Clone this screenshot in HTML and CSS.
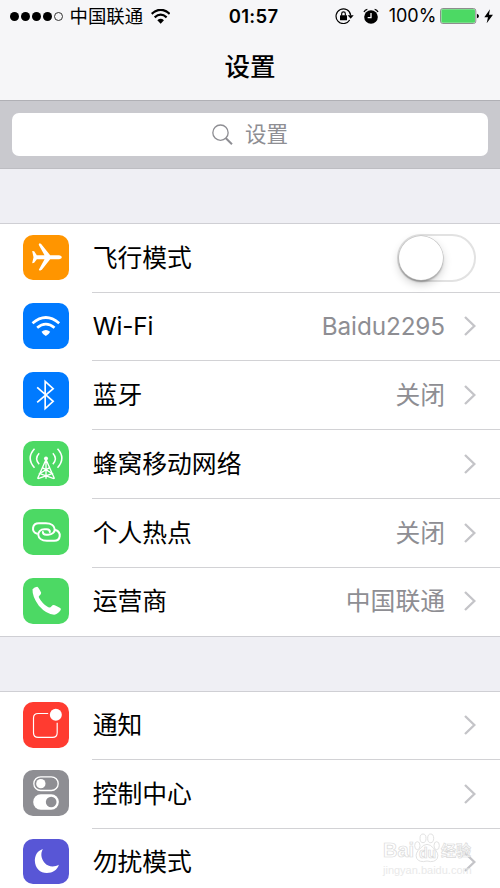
FILE: index.html
```html
<!DOCTYPE html>
<html lang="zh-CN">
<head>
<meta charset="utf-8">
<title>设置</title>
<link rel="stylesheet" href="styles.css">
</head>
<body>
<svg class="defs" width="0" height="0">
  <symbol id="chevron" viewBox="0 0 36 60"><path d="M3 3 L31 30 L3 57" fill="none" stroke="#c4c4c8" stroke-width="7"/></symbol>
</svg>
<header class="header">
  <div class="status">
    <div class="status-left">
      <span class="dots"><i></i><i></i><i></i><i></i><i class="empty"></i></span>
      <span class="carrier">中国联通</span>
      <svg class="st-wifi" viewBox="455 24 58 45"><g fill="none" stroke="#000" stroke-width="6.5"><path d="M457 38.500Q484 14 511 38.500"/><path d="M466 49Q484 33 502 49"/></g><path d="M474 58Q484 49 494 58L484 68Z"/></svg>
    </div>
    <div class="time">01:57</div>
    <div class="status-right">
      <svg class="st-lock" viewBox="254 22 56 50"><path d="M298 58A22 22 0 1 1 301 44" fill="none" stroke="#000" stroke-width="3.500"/><path d="M292 44H310L301 54Z"/><rect x="269" y="44" width="21" height="15" rx="1.500"/><path d="M274 45V39a5.500 5.500 0 0 1 11 0V45" fill="none" stroke="#000" stroke-width="3.500"/></svg>
      <svg class="st-alarm" viewBox="338 22 48 50"><circle cx="362" cy="49" r="20.500"/><path d="M341 34Q344 27 351 26M383 34Q380 27 373 26" fill="none" stroke="#000" stroke-width="4"/><path d="M362 37V51H352" fill="none" stroke="#f6f6f8" stroke-width="4"/></svg>
      <span class="percent">100%</span>
      <svg class="st-battery" viewBox="570 24 118 48"><rect x="571.500" y="25.500" width="106" height="45" rx="7" fill="#f6f6f8" stroke="#777" stroke-width="2.500"/><rect x="574" y="28" width="101" height="40" rx="4" fill="#4cd964"/><path d="M681 41q6 2 6 7t-6 7z"/></svg>
      <svg class="st-bolt" viewBox="700 26 28 44"><path d="M718 27L701 51H712L708 69L727 43H715Z"/></svg>
    </div>
  </div>
  <h1 class="title">设置</h1>
</header>
<div class="search-bar">
  <div class="search">
    <svg class="search-icon" viewBox="635 100 64 64"><circle cx="660.500" cy="126" r="23" fill="none" stroke="#8e8e93" stroke-width="4"/><path d="M676 142L695 161" stroke="#8e8e93" stroke-width="6"/></svg>
    <span>设置</span>
  </div>
</div>
<main>
  <section class="group">
    <div class="row">
      <svg class="icon orange" viewBox="69.500 28 137 137"><path fill="#fff" d="M97 76L103 77L111 89H134L117 58Q116 54 120 53L124 55L151 89H178Q186 90 186 95Q186 100 178 101H151L126 132L120 135L117 132L134 101H111L103 111L97 113L101 95Z"/></svg>
      <div class="body"><span class="label">飞行模式</span><span class="switch"></span></div>
    </div>
    <div class="row">
      <svg class="icon blue" viewBox="69.500 235 137 137"><g fill="none" stroke="#fff" stroke-width="8"><path d="M98 296Q138 261 178 296"/><path d="M112 309Q138 287 164 309"/></g><path fill="#fff" d="M125 321Q138 311 151 321Q148 328 138 334Q128 328 125 321Z"/></svg>
      <div class="body"><span class="label latin">Wi-Fi</span><span class="value latin">Baidu2295</span><svg class="chev"><use href="#chevron"/></svg></div>
    </div>
    <div class="row">
      <svg class="icon blue" viewBox="69.500 36 137 137"><path d="M112 82L160 124L136 146V64L160 86L112 127" fill="none" stroke="#fff" stroke-width="5"/></svg>
      <div class="body"><span class="label">蓝牙</span><span class="value">关闭</span><svg class="chev"><use href="#chevron"/></svg></div>
    </div>
    <div class="row">
      <svg class="icon green" viewBox="69.500 242.500 137 137"><g fill="none" stroke="#fff" stroke-width="4.500"><path d="M104 266Q78 294 104 323M118 279Q103 295 118 312M173 266Q199 294 173 323M159 279Q174 295 159 312"/><path d="M138.500 298L113 356M138.500 298L164 356M138.500 298V356M129 323L157 340L115 355M148 323L120 340L162 355" stroke-width="4"/></g><circle cx="138.500" cy="295" r="6" fill="#fff"/></svg>
      <div class="body"><span class="label">蜂窝移动网络</span><svg class="chev"><use href="#chevron"/></svg></div>
    </div>
    <div class="row">
      <svg class="icon green" viewBox="69.500 29 137 137"><g fill="none" stroke="#fff" stroke-width="6" stroke-linecap="round"><path d="M111 103C94 97 96 72 117 72H138C172 72 172 106 145 106H139Q129 106 129 98"/><path d="M167 92C185 98 184 124 163 124H141C108 124 108 90 134 90H141Q150 90 150 98"/></g></svg>
      <div class="body"><span class="label">个人热点</span><span class="value">关闭</span><svg class="chev"><use href="#chevron"/></svg></div>
    </div>
    <div class="row">
      <svg class="icon green" viewBox="69.500 235 137 137"><path fill="#fff" d="M98 269Q104 261 112 261Q116 262 124 279Q125 283 117 290Q115 294 129 310Q145 326 152 323L158 317Q162 315 168 318L181 325Q185 328 182 332Q174 344 163 345Q140 344 117 318Q97 292 98 269Z"/></svg>
      <div class="body"><span class="label">运营商</span><span class="value">中国联通</span><svg class="chev"><use href="#chevron"/></svg></div>
    </div>
  </section>
  <section class="group second">
    <div class="row">
      <svg class="icon red" viewBox="69.500 36 137 137"><path d="M145 70.500H115Q101 70.500 101 84V128Q101 142 115 142H158Q172 142 172 128V98" fill="none" stroke="#fff" stroke-width="3.500"/><circle cx="168" cy="74" r="18" fill="#fff"/></svg>
      <div class="body"><span class="label">通知</span><svg class="chev"><use href="#chevron"/></svg></div>
    </div>
    <div class="row">
      <svg class="icon gray" viewBox="69.500 242 137 137"><rect x="102" y="262.500" width="73" height="41" rx="20.500" fill="none" stroke="#fff" stroke-width="4"/><circle cx="123" cy="283" r="14" fill="#fff"/><rect x="100" y="315" width="77" height="46" rx="23" fill="#fff"/><circle cx="154" cy="338" r="16" fill="#8e8e93"/></svg>
      <div class="body"><span class="label">控制中心</span><svg class="chev"><use href="#chevron"/></svg></div>
    </div>
    <div class="row">
      <svg class="icon purple" viewBox="69.500 448 137 137"><path fill="#fff" d="M129 478C111 484 105 499 105 513C106 536 121 550 141 550C159 549 172 541 177 525C163 533 145 532 134 519C123 506 122 491 129 478Z"/></svg>
      <div class="body"><span class="label">勿扰模式</span><svg class="chev"><use href="#chevron"/></svg></div>
    </div>
  </section>
</main>
<div class="watermark">
  <div class="wm-brand"><span class="wm-bai">Bai</span><span class="paw"><svg viewBox="0 0 78 90"><g fill="#fff" stroke="#dedede" stroke-width="3"><ellipse cx="10" cy="38" rx="8" ry="12"/><ellipse cx="27" cy="16" rx="9" ry="13"/><ellipse cx="50" cy="16" rx="9" ry="13"/><ellipse cx="68" cy="38" rx="8" ry="12"/><path d="M39 34Q49 34 59 46Q76 60 70 76Q62 90 39 84Q16 90 8 76Q2 60 19 46Q29 34 39 34Z"/></g></svg><b>du</b></span><span class="wm-cn">经验</span></div>
  <div class="wm-url">jingyan.baidu.com</div>
</div>
</body>
</html>
```
FILE: styles.css
```css
* { box-sizing: border-box; }
body {
  margin: 0;
  width: 500px;
  height: 888px;
  overflow: hidden;
  position: relative;
  background: #efeff4;
  color: #000;
  font-family: Inter, "Noto Sans CJK SC", sans-serif;
}
svg { display: block; flex: none; }
.defs { position: absolute; }

.header { height: 101px; background: #f6f6f8; border-bottom: 1px solid #b0b0b5; }
.status { height: 32px; display: grid; grid-template-columns: 1fr auto 1fr; align-items: center; padding: 0 7px 0 10px; line-height: 32px; }
.status-left, .status-right { display: flex; align-items: center; }
.status-right { justify-content: flex-end; }
.dots { display: flex; gap: 2px; }
.dots i { width: 9px; height: 9px; border-radius: 50%; background: #000; }
.dots .empty { background: none; border: 1px solid #333; }
.carrier { font-size: 18.4px; margin-left: 6.5px; }
.st-wifi { width: 19.3px; height: 15px; margin-left: 8px; }
.time { font-size: 18.5px; font-weight: 600; letter-spacing: 0.3px; padding-left: 4px; }
.st-lock { width: 18.7px; height: 16.7px; margin-right: 9px; }
.st-alarm { width: 16px; height: 16.7px; margin-right: 10px; }
.percent { font-size: 18px; }
.st-battery { width: 39.3px; height: 16px; margin: 0 4px 0 4px; }
.st-bolt { width: 9.3px; height: 14.7px; }
.title { margin: 0; font-size: 25.5px; font-weight: 500; line-height: 69px; height: 68px; text-align: center; }

.search-bar { height: 68px; background: #c9c9ce; border-bottom: 1px solid #bdbdc2; padding: 11.5px 12.3px 12.5px; }
.search { height: 43.5px; background: #fff; border-radius: 7px; display: flex; align-items: center; justify-content: center; gap: 11.5px; color: #8e8e93; font-size: 21.5px; line-height: 42px; }
.search-icon { width: 21.3px; height: 21.3px; }

.group { margin-top: 54px; background: #fff; border-top: 1px solid #cfcfd4; border-bottom: 1px solid #cfcfd4; }
.second { margin-top: 54.5px; }
.row { height: 68.75px; display: flex; align-items: center; padding-left: 23.2px; }
.row:first-child { height: 68.5px; }
.row:last-child { height: 68px; }
.second .row:first-child { height: 68px; }
.icon { width: 45.7px; height: 45.7px; border-radius: 10px; margin-right: 23.1px; position: relative; top: -0.8px; }
.second .icon { top: -1.2px; }
.body { flex: 1; height: 100%; display: flex; align-items: center; padding-right: 24px; border-bottom: 1px solid #d2d2d5; }
.row:last-child .body { border-bottom: 0; padding-bottom: 1px; }
.second .row:first-child .body { padding-bottom: 1px; }
.label { font-size: 24.8px; line-height: 40px; margin-right: auto; padding-left: 0.7px; }
.value { font-size: 24.8px; line-height: 40px; color: #8e8e93; }
.latin { font-size: 24.3px; line-height: 42px; letter-spacing: -0.1px; }
.chev { width: 12px; height: 20px; margin-left: 19px; }
.orange { background: #ff9500; }
.blue { background: #007aff; }
.green { background: #4cd964; }
.red { background: #ff3b30; }
.gray { background: #8e8e93; }
.purple { background: #5856d6; }

.switch { width: 79px; height: 48px; border: 2px solid #e2e2e2; border-radius: 24px; background: #fff; }
.switch::before { content: ""; display: block; width: 44px; height: 44px; border-radius: 50%; background: #fff; box-shadow: 0 0 0 0.5px #bbb, 0 2px 2px rgba(0,0,0,.28), 0 4px 10px rgba(0,0,0,.2); }

.watermark { position: absolute; left: 383px; top: 833px; width: 92px; opacity: .85; }
.wm-brand { display: flex; align-items: flex-end; height: 30px; color: #fff; font: 700 20px/25px "Liberation Sans", "Noto Sans CJK SC", sans-serif; -webkit-text-stroke: 0.7px #d4d4d4; }
.wm-bai { width: 31px; }
.paw { position: relative; width: 26px; height: 30px; }
.paw svg { width: 26px; height: 30px; }
.paw b { position: absolute; left: 5px; top: 12px; font-size: 14px; line-height: 16px; }
.wm-cn { font-size: 15px; line-height: 24px; margin-left: 1px; }
.wm-url { font: 11px/12px "Liberation Sans", sans-serif; color: #e6e6e6; margin-top: 1px; }
```
